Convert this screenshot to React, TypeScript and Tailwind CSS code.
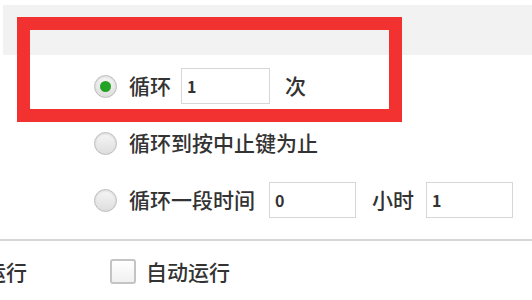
import React from "react";

const font = { fontFamily: '"Noto Sans CJK SC", "Noto Sans", sans-serif' };

function Radio({ checked }: { checked?: boolean }) {
  return (
    <div className="w-[23px] h-[23px] rounded-full border border-[#bdbdbd] bg-gradient-to-b from-[#f6f6f6] to-[#dedede] flex items-center justify-center shadow-[inset_0_1px_2px_rgba(0,0,0,0.12)] shrink-0">
      {checked && <div className="w-[11px] h-[11px] rounded-full bg-[#23a323]" />}
    </div>
  );
}

function Box({ value, w }: { value: string; w: string }) {
  return (
    <div className={`${w} h-[36px] border border-[#d6d6d6] bg-white flex items-center pl-[5px] text-[16px] font-bold text-[#333]`}>
      {value}
    </div>
  );
}

export default function App() {
  return (
    <div className="relative w-[532px] h-[300px] bg-white overflow-hidden text-[#333] text-[21px]" style={font}>
      <div className="mt-[5px] ml-[3px] h-[50px] bg-[#f2f2f2]" />
      <div className="pl-[94px] mt-[13px] flex flex-col gap-[21px]">
        <div className="h-[36px] flex items-center">
          <Radio checked />
          <span className="ml-[12px] font-medium">循环</span>
          <div className="ml-[10px]"><Box value="1" w="w-[89px]" /></div>
          <span className="ml-[15px] font-medium">次</span>
        </div>
        <div className="h-[36px] flex items-center">
          <Radio />
          <span className="ml-[12px] font-medium">循环到按中止键为止</span>
        </div>
        <div className="h-[36px] flex items-center">
          <Radio />
          <span className="ml-[12px] font-medium">循环一段时间</span>
          <div className="ml-[14px]"><Box value="0" w="w-[87px]" /></div>
          <span className="ml-[16px] font-medium">小时</span>
          <div className="ml-[12px]"><Box value="1" w="w-[87px]" /></div>
        </div>
      </div>
      <div className="mt-[21px] h-[2px] bg-[#d6d6d6]" />
      <div className="mt-[18px] h-[25px] flex items-center">
        <span className="-ml-[15px] font-medium">运行</span>
        <div className="ml-[83px] w-[26px] h-[25px] rounded-[3px] border-2 border-[#c4c4c4] bg-gradient-to-b from-white to-[#f0f0f0]" />
        <span className="ml-[10px] font-medium">自动运行</span>
      </div>
      <div className="absolute left-[17px] top-[17px] w-[385px] h-[105px] border-[13px] border-[#f23131]" />
    </div>
  );
}
